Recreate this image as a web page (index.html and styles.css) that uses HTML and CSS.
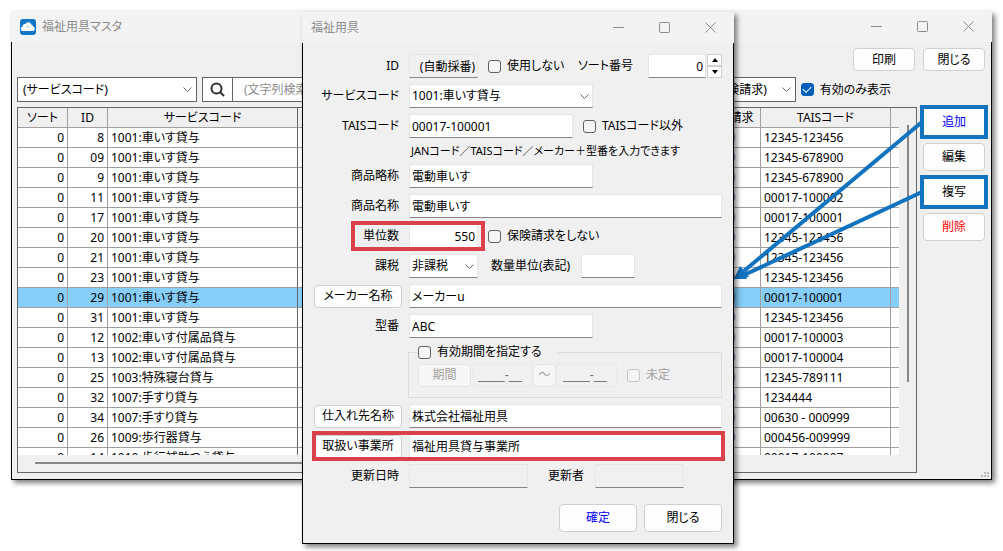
FILE: index.html
```html
<!DOCTYPE html>
<html lang="ja">
<head>
    <meta charset="UTF-8">
    <meta name="viewport" content="width=device-width, initial-scale=1.0">
    <title>福祉用具マスタ</title>
    <link rel="stylesheet" href="styles.css">
</head>
<body>
    <main class="window">
        <header class="titlebar">
            <svg class="app-icon" width="16" height="16" viewBox="0 0 16 16">
                <rect width="16" height="16" rx="3" fill="#1476c6"/>
                <path d="M3.400 12a2.300 2.300 0 0 1-.9-4.500A2.500 2.500 0 0 1 5.400 5a3.200 3.200 0 0 1 5.800.4A3 3 0 0 1 13.500 8a2.100 2.100 0 0 1-.3 4z" fill="#fff"/>
                <path d="M6 7l1.500 1 1.500-2M8.500 9l1.500-1.500" stroke="#a9d2f0" fill="none"/>
            </svg>
            <h1>福祉用具マスタ</h1>
            <div class="window-controls">
                <button type="button" aria-label="最小化"><svg width="11" height="11"><path d="M0 5.500h11"/></svg></button>
                <button type="button" aria-label="最大化"><svg width="11" height="11"><rect x=".5" y=".5" width="10" height="10" rx="1"/></svg></button>
                <button type="button" aria-label="閉じる"><svg width="11" height="11"><path d="M.5 .5l10 10M10.500 .5l-10 10"/></svg></button>
            </div>
        </header>
        <div class="window-body">
            <div class="toolbar">
                <button type="button" class="btn">印刷</button>
                <button type="button" class="btn">閉じる</button>
            </div>
            <div class="filters">
                <div class="select boxed filter-field">
                    <select aria-label="検索項目"><option>(サービスコード)</option></select>
                    <svg width="9" height="6"><path d="M.5 .5l4 4 4-4"/></svg>
                </div>
                <div class="search">
                    <button type="button" aria-label="検索">
                        <svg width="15" height="15" viewBox="0 0 15 15"><circle cx="6.500" cy="6.500" r="5"/><path d="M10 10l4 4"/></svg>
                    </button>
                    <input type="text" placeholder="(文字列検索)" aria-label="文字列検索">
                </div>
                <div class="select boxed filter-claim">
                    <select aria-label="保険請求"><option>(保険請求)</option></select>
                    <svg width="9" height="6"><path d="M.5 .5l4 4 4-4"/></svg>
                </div>
                <label class="check"><input type="checkbox" checked>有効のみ表示</label>
            </div>
            <div class="content">
                <div class="grid">
                    <div class="grid-pane">
                        <table>
                            <colgroup>
                                <col class="col-sort"><col class="col-id"><col class="col-service"><col>
                                <col class="col-claim"><col class="col-tais"><col class="col-rest">
                            </colgroup>
                            <thead>
                                <tr><th>ソート</th><th>ID</th><th>サービスコード</th><th></th><th>保険請求</th><th>TAISコード</th><th></th></tr>
                            </thead>
                            <tbody>
                                <tr><td>0</td><td>8</td><td>1001:車いす貸与</td><td></td><td>○</td><td>12345-123456</td><td></td></tr>
                                <tr><td>0</td><td>09</td><td>1001:車いす貸与</td><td></td><td>○</td><td>12345-678900</td><td></td></tr>
                                <tr><td>0</td><td>9</td><td>1001:車いす貸与</td><td></td><td>○</td><td>12345-678900</td><td></td></tr>
                                <tr><td>0</td><td>11</td><td>1001:車いす貸与</td><td></td><td>○</td><td>00017-100002</td><td></td></tr>
                                <tr><td>0</td><td>17</td><td>1001:車いす貸与</td><td></td><td>○</td><td>00017-100001</td><td></td></tr>
                                <tr><td>0</td><td>20</td><td>1001:車いす貸与</td><td></td><td>○</td><td>12345-123456</td><td></td></tr>
                                <tr><td>0</td><td>21</td><td>1001:車いす貸与</td><td></td><td>○</td><td>12345-123456</td><td></td></tr>
                                <tr><td>0</td><td>23</td><td>1001:車いす貸与</td><td></td><td>○</td><td>12345-123456</td><td></td></tr>
                                <tr class="selected"><td>0</td><td>29</td><td>1001:車いす貸与</td><td></td><td>○</td><td>00017-100001</td><td></td></tr>
                                <tr><td>0</td><td>31</td><td>1001:車いす貸与</td><td></td><td>○</td><td>12345-123456</td><td></td></tr>
                                <tr><td>0</td><td>12</td><td>1002:車いす付属品貸与</td><td></td><td>○</td><td>00017-100003</td><td></td></tr>
                                <tr><td>0</td><td>13</td><td>1002:車いす付属品貸与</td><td></td><td>○</td><td>00017-100004</td><td></td></tr>
                                <tr><td>0</td><td>25</td><td>1003:特殊寝台貸与</td><td></td><td>○</td><td>12345-789111</td><td></td></tr>
                                <tr><td>0</td><td>32</td><td>1007:手すり貸与</td><td></td><td>○</td><td>1234444</td><td></td></tr>
                                <tr><td>0</td><td>34</td><td>1007:手すり貸与</td><td></td><td>○</td><td>00630 - 000999</td><td></td></tr>
                                <tr><td>0</td><td>26</td><td>1009:歩行器貸与</td><td></td><td>○</td><td>000456-009999</td><td></td></tr>
                                <tr><td>0</td><td>14</td><td>1010:歩行補助つえ貸与</td><td></td><td>○</td><td>00017-100007</td><td></td></tr>
                            </tbody>
                        </table>
                    </div>
                    <div class="scroll-v"><span></span></div>
                    <div class="scroll-h"><span></span></div>
                </div>
                <div class="actions">
                    <button type="button" class="btn primary marked">追加</button>
                    <button type="button" class="btn">編集</button>
                    <button type="button" class="btn marked">複写</button>
                    <button type="button" class="btn danger">削除</button>
                </div>
            </div>
            <svg class="grip" width="8" height="5" fill="#bbb">
                <path d="M3 0h2v2h-2zM6 0h2v2h-2zM0 3h2v2h-2zM3 3h2v2h-2zM6 3h2v2h-2z"/>
            </svg>
        </div>
    </main>

    <svg class="arrows" width="200" height="180" viewBox="730 110 200 180">
        <path d="M922 122L744 271M922 192L744 275" stroke="#1273be" stroke-width="4" fill="none"/>
        <path d="M734 279L740 266 749 277z" fill="#1273be"/>
        <path d="M734 279L742 268 747 279z" fill="#1273be"/>
    </svg>

    <section class="window dialog" role="dialog" aria-labelledby="dialog-title">
        <header class="titlebar">
            <h2 id="dialog-title">福祉用具</h2>
            <div class="window-controls">
                <button type="button" aria-label="最小化"><svg width="11" height="11"><path d="M0 5.500h11"/></svg></button>
                <button type="button" aria-label="最大化"><svg width="11" height="11"><rect x=".5" y=".5" width="10" height="10" rx="1"/></svg></button>
                <button type="button" aria-label="閉じる"><svg width="11" height="11"><path d="M.5 .5l10 10M10.500 .5l-10 10"/></svg></button>
            </div>
        </header>
        <form class="window-body form">
            <div class="row">
                <label class="name" for="item-id">ID</label>
                <input class="w-small num" id="item-id" type="text" value="(自動採番)" readonly>
                <label class="check"><input type="checkbox">使用しない</label>
                <div class="sort">
                    <label for="sort-no">ソート番号</label>
                    <div class="spinner">
                        <input class="num" id="sort-no" type="text" value="0">
                        <div class="spin-buttons">
                            <button type="button" aria-label="増やす"><svg width="6" height="4"><path d="M0 4l3-4 3 4z"/></svg></button>
                            <button type="button" aria-label="減らす"><svg width="6" height="4"><path d="M0 0l3 4 3-4z"/></svg></button>
                        </div>
                    </div>
                </div>
            </div>
            <div class="row">
                <label class="name" for="service">サービスコード</label>
                <div class="select w-large">
                    <select id="service"><option>1001:車いす貸与</option></select>
                    <svg width="9" height="6"><path d="M.5 .5l4 4 4-4"/></svg>
                </div>
            </div>
            <div class="row">
                <label class="name" for="tais">TAISコード</label>
                <input class="w-medium" id="tais" type="text" value="00017-100001">
                <label class="check"><input type="checkbox">TAISコード以外</label>
            </div>
            <p class="hint">JANコード／TAISコード／メーカー＋型番を入力できます</p>
            <div class="row">
                <label class="name" for="short-name">商品略称</label>
                <input class="w-large" id="short-name" type="text" value="電動車いす">
            </div>
            <div class="row">
                <label class="name" for="full-name">商品名称</label>
                <input class="w-full" id="full-name" type="text" value="電動車いす">
            </div>
            <div class="row">
                <label class="name" for="units">単位数</label>
                <input class="w-small num" id="units" type="text" value="550">
                <label class="check"><input type="checkbox">保険請求をしない</label>
                <span class="highlight highlight-units"></span>
            </div>
            <div class="row">
                <label class="name" for="tax">課税</label>
                <div class="select w-small">
                    <select id="tax"><option>非課税</option></select>
                    <svg width="9" height="6"><path d="M.5 .5l4 4 4-4"/></svg>
                </div>
                <label class="inline" for="unit-label">数量単位(表記)</label>
                <input class="w-tiny" id="unit-label" type="text">
            </div>
            <div class="row">
                <button type="button" class="btn lookup">メーカー名称</button>
                <input class="w-full" type="text" value="メーカーu" aria-label="メーカー名称">
            </div>
            <div class="row">
                <label class="name" for="model">型番</label>
                <input class="w-large" id="model" type="text" value="ABC">
            </div>
            <fieldset class="period">
                <legend><label class="check"><input type="checkbox">有効期間を指定する</label></legend>
                <div class="period-row">
                    <button type="button" class="btn" disabled>期間</button>
                    <input type="text" value="____-__" aria-label="開始" disabled>
                    <button type="button" class="btn wave" disabled>～</button>
                    <input type="text" value="____-__" aria-label="終了" disabled>
                    <label class="check off"><input type="checkbox" disabled>未定</label>
                </div>
            </fieldset>
            <div class="row">
                <button type="button" class="btn lookup">仕入れ先名称</button>
                <input class="w-full" type="text" value="株式会社福祉用具" aria-label="仕入れ先名称">
            </div>
            <div class="row">
                <button type="button" class="btn lookup">取扱い事業所</button>
                <input class="w-full" type="text" value="福祉用具貸与事業所" aria-label="取扱い事業所">
                <span class="highlight highlight-office"></span>
            </div>
            <div class="row">
                <label class="name" for="updated">更新日時</label>
                <input class="w-date" id="updated" type="text" readonly>
                <label class="inline updater" for="updater">更新者</label>
                <input class="w-user" id="updater" type="text" readonly>
            </div>
            <div class="dialog-buttons">
                <button type="button" class="btn primary">確定</button>
                <button type="button" class="btn">閉じる</button>
            </div>
        </form>
    </section>
</body>
</html>
```

FILE: styles.css
```css
* {
    box-sizing: border-box;
}
body {
    margin: 0;
    padding: 11px;
    background: #fff;
    color: #000;
    font-family: "Noto Sans", "Noto Sans CJK JP", sans-serif;
    font-size: 12px;
    line-height: 16px;
    font-feature-settings: "palt";
}
button, input, select {
    margin: 0;
    font: inherit;
    font-feature-settings: inherit;
    color: inherit;
}

/* windows */
.window {
    box-shadow: 3px 3px 5px rgba(0, 0, 0, 0.5);
}
.titlebar {
    display: flex;
    align-items: center;
    height: 31px;
    padding-left: 9px;
    padding-right: 1px;
    background: #f3f3f3;
    color: #8c8c8c;
}
.titlebar h1, .titlebar h2 {
    margin: 0;
    font-size: 12px;
    font-weight: normal;
}
.app-icon {
    margin-right: 6px;
}
.window-controls {
    display: flex;
    margin-left: auto;
}
.window-controls button {
    display: flex;
    align-items: center;
    justify-content: center;
    width: 46px;
    height: 31px;
    padding: 0;
    border: none;
    background: none;
}
.window-controls svg {
    fill: none;
    stroke: #8c8c8c;
}
.window-body {
    border: 1px solid #000;
    border-top: none;
    background: #f0f0f0;
    padding: 6px 6px 6px 5px;
    position: relative;
}
.dialog {
    position: absolute;
    left: 302px;
    top: 12px;
    width: 432px;
}

/* buttons */
.btn {
    width: 62px;
    height: 23px;
    padding: 0;
    border: 1px solid #d0d0d0;
    border-radius: 4px;
    background: #fdfdfd;
    text-align: center;
}
.btn:disabled {
    color: #a0a0a0;
    border-color: #e4e4e4;
    background: #f7f7f7;
}
.primary {
    color: #00f;
}
.danger {
    color: #f00;
}
.marked {
    border-radius: 0;
    outline: 4px solid #1273be;
    outline-offset: -1px;
}

/* main window */
.toolbar {
    display: flex;
    justify-content: flex-end;
    gap: 8px;
}
.filters {
    display: flex;
    align-items: center;
    gap: 5px;
    margin: 6px 0 5px;
    padding-right: 94px;
}
.select {
    position: relative;
    height: 24px;
}
.select select {
    appearance: none;
    width: 100%;
    height: 100%;
    padding: 0 20px 0 2px;
    border: 1px solid #e6e6e6;
    border-bottom-color: #868686;
    border-radius: 0;
    background: #fff;
}
.select svg {
    position: absolute;
    right: 4px;
    top: 10px;
    fill: none;
    stroke: #666;
    pointer-events: none;
}
.select.boxed {
    height: 25px;
}
.boxed select {
    border-color: #646464;
    padding-left: 5px;
}
.boxed svg {
    right: 5px;
}
.filter-field {
    width: 180px;
}
.filter-claim {
    width: 90px;
}
.search {
    display: flex;
    flex: 1;
    height: 25px;
    border: 1px solid #646464;
    background: #fff;
}
.search button {
    display: flex;
    align-items: center;
    justify-content: center;
    width: 30px;
    padding: 0;
    border: none;
    border-right: 1px solid #646464;
    background: #fdfdfd;
}
.search svg {
    fill: none;
    stroke: #333;
    stroke-width: 2;
}
.search input {
    flex: 1;
    min-width: 0;
    padding: 0 11px;
    border: none;
    background: none;
}
.search input::placeholder {
    color: #8c8c8c;
}

.check {
    display: flex;
    align-items: center;
    gap: 6px;
    white-space: nowrap;
}
.check input {
    appearance: none;
    display: grid;
    place-items: center;
    width: 13px;
    height: 13px;
    border: 1px solid #626262;
    border-radius: 3px;
    background: #f5f5f5;
}
.check input:checked {
    border-color: #005fb8;
    background: #005fb8;
}
.check input:checked::before {
    content: "";
    width: 7px;
    height: 4px;
    margin-bottom: 3px;
    border-left: 1px solid #fff;
    border-bottom: 1px solid #fff;
    transform: rotate(-45deg);
}
.check input:disabled {
    border-color: #c4c4c4;
}
.off {
    color: #a0a0a0;
}

.content {
    display: flex;
    align-items: flex-start;
    gap: 6px;
}
.grid {
    display: grid;
    flex: 1;
    min-width: 0;
    grid-template-columns: 1fr 17px;
    grid-template-rows: 347px 17px;
    border: 1px solid #646464;
}
.grid-pane {
    overflow: hidden;
    background: #fff;
}
.grid table {
    width: 100%;
    table-layout: fixed;
    border-collapse: separate;
    border-spacing: 0;
}
.col-sort {
    width: 50px;
}
.col-id {
    width: 40px;
}
.col-service {
    width: 190px;
}
.col-claim {
    width: 62px;
}
.col-tais {
    width: 130px;
}
.col-rest {
    width: 8px;
}
.grid th, .grid td {
    height: 20px;
    padding: 0 3px;
    border-right: 1px solid #a0a0a0;
    border-bottom: 1px solid #a0a0a0;
    line-height: 19px;
    font-weight: normal;
    white-space: nowrap;
}
.grid th {
    background: #f0f0f0;
    text-align: center;
}
.grid td:nth-child(-n+2) {
    text-align: right;
}
.grid td:nth-child(5) {
    text-align: center;
}
.grid th:nth-child(3), .grid td:nth-child(3) {
    border-right-color: #646464;
}
.grid th:last-child, .grid td:last-child {
    padding: 0;
    border-right: none;
}
.selected {
    background: #87cefa;
}
.scroll-v {
    padding: 17px 6px 0 8px;
}
.scroll-v span {
    display: block;
    width: 2px;
    height: 257px;
    background: #868686;
}
.scroll-h {
    padding: 7px 17px 0;
}
.scroll-h span {
    display: block;
    width: 75%;
    height: 2px;
    background: #868686;
}
.actions {
    display: flex;
    flex-direction: column;
    gap: 7px;
    padding-top: 1px;
}
.actions .btn {
    height: 28px;
}
.grip {
    position: absolute;
    right: 2px;
    bottom: 2px;
}
.arrows {
    position: absolute;
    left: 730px;
    top: 110px;
}

/* dialog form */
.form {
    display: flex;
    flex-direction: column;
    gap: 6px;
    padding: 11px;
}
.row {
    display: flex;
    align-items: center;
    height: 24px;
    position: relative;
}
.name {
    width: 88px;
    margin-right: 7px;
    padding-right: 3px;
    text-align: right;
}
.lookup {
    width: 88px;
    margin-right: 7px;
}
.form input[type="text"] {
    height: 24px;
    padding: 0 2px;
    border: 1px solid #e6e6e6;
    border-bottom-color: #868686;
    background: #fff;
}
.form input[readonly] {
    background: #f0f0f0;
}
.form .num {
    padding-right: 1px;
    text-align: right;
}
.w-tiny {
    width: 54px;
}
.w-small {
    width: 69px;
}
.w-medium {
    width: 164px;
}
.w-large {
    width: 184px;
}
.w-date {
    width: 119px;
}
.w-user {
    width: 89px;
}
.w-full {
    flex: 1;
    min-width: 0;
}
.row > .check {
    margin-left: 10px;
}
.inline {
    margin: 0 11px 0 13px;
}
.updater {
    margin-left: 20px;
}
.sort {
    display: flex;
    align-items: center;
    gap: 15px;
    margin-left: auto;
}
.spinner {
    display: flex;
    gap: 1px;
}
.spinner input {
    width: 58px;
}
.spin-buttons {
    display: flex;
    flex-direction: column;
}
.spin-buttons button {
    display: flex;
    align-items: center;
    justify-content: center;
    width: 15px;
    height: 12px;
    padding: 0;
    border: 1px solid #d0d0d0;
    background: #fdfdfd;
}
.hint {
    height: 14px;
    margin: 0;
    padding-left: 97px;
    font-size: 11px;
    line-height: 14px;
    white-space: nowrap;
}
.period {
    height: 54px;
    min-width: 0;
    margin: 0 0 0 94px;
    padding: 0 9px;
    border: 1px solid #dcdcdc;
}
.period legend {
    padding: 0 16px 0 0;
}
.period-row {
    display: flex;
    align-items: center;
    margin-top: 3px;
}
.period-row .btn {
    width: 53px;
}
.period-row .wave {
    width: 23px;
}
.form .period-row input[type="text"] {
    width: 60px;
    margin: 0 1px;
    padding: 0 5px;
    border-color: #ebebeb;
    background: #f0f0f0;
    color: #6d6d6d;
    font-family: "Liberation Sans", sans-serif;
}
.period-row .check {
    margin-left: 9px;
}
.highlight {
    position: absolute;
    height: 30px;
    border: 4px solid #dc414b;
    pointer-events: none;
}
.highlight-units {
    left: 37px;
    width: 134px;
}
.highlight-office {
    left: -2px;
    right: -3px;
}
.dialog-buttons {
    display: flex;
    justify-content: flex-end;
    gap: 7px;
    padding-top: 10px;
}
.dialog-buttons .btn {
    width: 78px;
    height: 28px;
}
```
